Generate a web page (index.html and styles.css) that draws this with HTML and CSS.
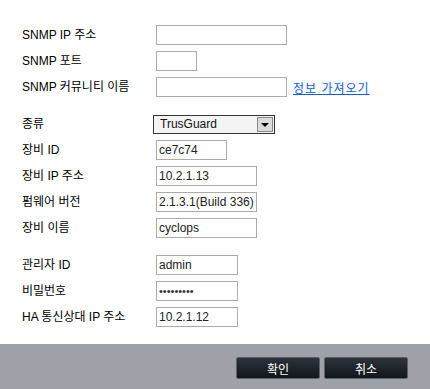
FILE: index.html
```html
<!DOCTYPE html>
<html lang="ko">
<head>
  <meta charset="UTF-8" />
  <title>장비 등록</title>
  <link rel="stylesheet" href="styles.css">
</head>
<body>
  <form class="dialog">
    <div class="fields">
      <div class="group">
        <label>SNMP IP 주소</label>
        <div class="cell"><input type="text" class="w130"></div>

        <label>SNMP 포트</label>
        <div class="cell"><input type="text" class="w40"></div>

        <label>SNMP 커뮤니티 이름</label>
        <div class="cell"><input type="text" class="w130"><a href="#" class="fetch">정보 가져오기</a></div>
      </div>

      <div class="group">
        <label>종류</label>
        <div class="cell">
          <div class="select">
            <span class="select-text">TrusGuard</span>
            <span class="select-arrow"></span>
          </div>
        </div>

        <label>장비 ID</label>
        <div class="cell"><input type="text" class="w70" value="ce7c74"></div>

        <label>장비 IP 주소</label>
        <div class="cell"><input type="text" class="w100" value="10.2.1.13"></div>

        <label>펌웨어 버전</label>
        <div class="cell"><input type="text" class="w100" value="2.1.3.1(Build 336)"></div>

        <label>장비 이름</label>
        <div class="cell"><input type="text" class="w100" value="cyclops"></div>
      </div>

      <div class="group">
        <label>관리자 ID</label>
        <div class="cell"><input type="text" class="w82" value="admin"></div>

        <label>비밀번호</label>
        <div class="cell"><input type="password" class="w82" value="123456789"></div>

        <label>HA 통신상대 IP 주소</label>
        <div class="cell"><input type="text" class="w82" value="10.2.1.12"></div>
      </div>
    </div>

    <div class="footer">
      <button type="button" class="btn">확인</button>
      <button type="button" class="btn">취소</button>
    </div>
  </form>
</body>
</html>
```

FILE: styles.css
```css
body {
  margin: 0;
  padding: 0;
  background: #ffffff;
  font-family: "Liberation Sans", "Noto Sans CJK KR", sans-serif;
  font-size: 12px;
  color: #000;
}

.dialog {
  width: 430px;
  height: 389px;
  display: flex;
  flex-direction: column;
}

.fields {
  flex: 1;
  padding: 25px 0 0 22px;
}

.group {
  display: grid;
  grid-template-columns: 134px auto;
  grid-auto-rows: 20px;
  row-gap: 6px;
  align-items: center;
  margin-bottom: 17px;
}

label {
  line-height: 20px;
}

.cell {
  display: flex;
  align-items: center;
  height: 20px;
}

input {
  box-sizing: border-box;
  height: 20px;
  margin: 0;
  padding: 0 2px;
  border: 1px solid #ababab;
  background: #fff;
  font-family: "Liberation Sans", "Noto Sans CJK KR", sans-serif;
  font-size: 12px;
  color: #222;
  outline: none;
}

input[type="password"] {
  font-size: 11px;
  letter-spacing: 0;
  color: #333;
}

.w40 { width: 41px; }
.w70 { width: 71px; }
.w82 { width: 82px; }
.w100 { width: 101px; }
.w130 { width: 131px; }

.fetch {
  margin-left: 6px;
  color: #0a5cf5;
  text-decoration: underline;
  letter-spacing: 1px;
}

/* 종류 선택 박스 */
.select {
  box-sizing: border-box;
  width: 122px;
  height: 19px;
  margin-left: -3px;
  display: flex;
  align-items: center;
  border: 1px solid #333;
  background: #f4f4f4;
  padding: 1px;
}

.select-text {
  flex: 1;
  padding-left: 5px;
  font-size: 12px;
  color: #111;
}

.select-arrow {
  box-sizing: border-box;
  width: 16px;
  height: 15px;
  border: 1px solid #888;
  background: #dcdcdc;
  position: relative;
}

.select-arrow::after {
  content: "";
  position: absolute;
  left: 3px;
  top: 5px;
  border-left: 4px solid transparent;
  border-right: 4px solid transparent;
  border-top: 4px solid #000;
}

.footer {
  height: 49px;
  background: #9ea1a7;
  display: flex;
  justify-content: flex-end;
  align-items: flex-start;
  gap: 4px;
  padding: 13px 22px 0 0;
  box-sizing: border-box;
}

.btn {
  width: 84px;
  height: 22px;
  border: 1px solid #5c6168;
  border-radius: 2px;
  background: linear-gradient(to bottom, #2c333b, #11161c);
  color: #fff;
  font-family: "Noto Sans CJK KR", sans-serif;
  font-size: 12px;
  padding: 0;
  cursor: pointer;
}
```
